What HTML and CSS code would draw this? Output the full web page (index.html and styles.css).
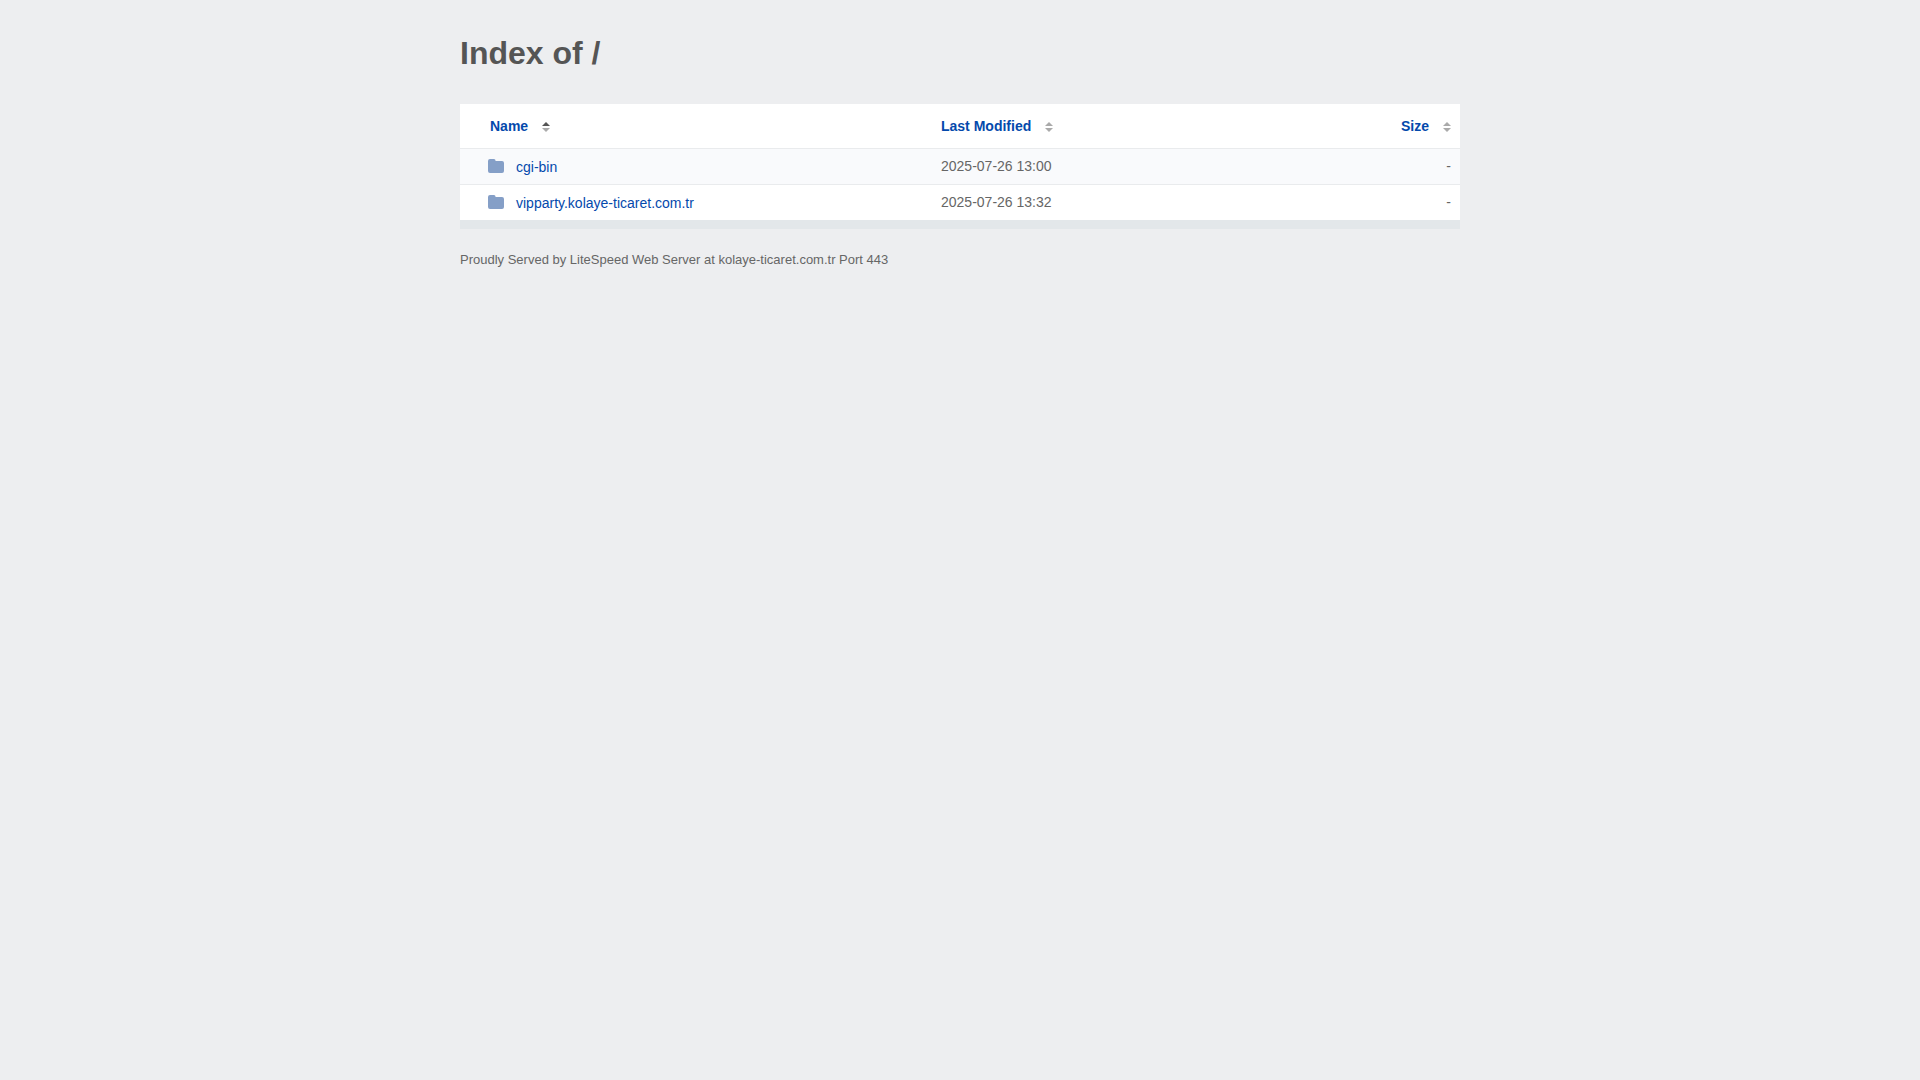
FILE: index.html
```html
<!DOCTYPE html>
<html lang="en">
<head>
    <meta charset="UTF-8">
    <meta name="viewport" content="width=device-width, initial-scale=1.0">
    <title>Index of /</title>
    <link rel="stylesheet" href="styles.css">
</head>
<body>

<!-- Folder icon used by the rows -->
<svg class="sprite" aria-hidden="true">
    <symbol id="folder" viewBox="0 0 16 16">
        <path d="M2 1h4a1.5 1.5 0 0 1 1.5 1.5V3H14a2 2 0 0 1 2 2v8a2 2 0 0 1-2 2H2a2 2 0 0 1-2-2V3a2 2 0 0 1 2-2z"/>
    </symbol>
</svg>

<div class="container">
    <h1>Index of /</h1>

    <table class="listing">
        <thead>
            <tr>
                <th class="name sort-up"><a href="#">Name</a><span class="arrows"></span></th>
                <th class="modified"><a href="#">Last Modified</a><span class="arrows"></span></th>
                <th class="size"><a href="#">Size</a><span class="arrows"></span></th>
            </tr>
        </thead>
        <tbody>
            <tr>
                <td class="name"><a href="#"><svg class="icon"><use href="#folder"/></svg>cgi-bin</a></td>
                <td class="modified">2025-07-26 13:00</td>
                <td class="size">-</td>
            </tr>
            <tr>
                <td class="name"><a href="#"><svg class="icon"><use href="#folder"/></svg>vipparty.kolaye-ticaret.com.tr</a></td>
                <td class="modified">2025-07-26 13:32</td>
                <td class="size">-</td>
            </tr>
        </tbody>
    </table>

    <footer>Proudly Served by LiteSpeed Web Server at kolaye-ticaret.com.tr Port 443</footer>
</div>

</body>
</html>
```
FILE: styles.css
```css
/* General styles */
body {
    font-family: "Liberation Sans", Arial, sans-serif;
    font-size: 14px;
    line-height: 19px;
    color: #666;
    background-color: #edeef0;
    margin: 0;
    padding: 32px 0 20px;
}

.sprite {
    display: none;
}

.container {
    max-width: 1000px;
    margin: 0 auto;
}

h1 {
    font-size: 32px;
    line-height: 42px;
    color: #555;
    margin: 0 0 30px;
}

a {
    color: #0449ac;
    text-decoration: none;
}

a:hover {
    text-decoration: underline;
}

/* File table */
.listing {
    width: 100%;
    table-layout: fixed;
    border-spacing: 0;
    background-color: #fff;
    border-bottom: 9px solid #e3e7ea;
}

.listing th,
.listing td {
    box-sizing: border-box;
    padding: 8px 9px;
    text-align: left;
    vertical-align: middle;
}

.listing th {
    padding: 13px 9px 12px;
}

.listing tbody td {
    border-top: 1px solid #e9ebed;
}

.listing tbody tr:nth-child(odd) {
    background-color: #f9fafc;
}

.listing th.name {
    width: 47%;
    padding-left: 30px;
}

.listing td.name {
    padding: 9px 9px 7px 28px;
}

.listing .modified {
    padding-left: 11px;
}

.listing .size {
    text-align: right;
}

td.name a {
    display: flex;
    align-items: center;
}

.icon {
    width: 16px;
    height: 16px;
    margin: 0 12px 3px 0;
    fill: #859fc7;
}

/* Sort arrows */
.arrows {
    display: inline-block;
    width: 8px;
    margin-left: 14px;
    vertical-align: middle;
}

.arrows::before,
.arrows::after {
    content: "";
    display: block;
    border: 4px solid transparent;
}

.arrows::before {
    border-top: 0;
    border-bottom-color: #aaa;
    margin-bottom: 2px;
}

.arrows::after {
    border-bottom: 0;
    border-top-color: #aaa;
}

.sort-up .arrows::before {
    border-bottom-color: #555;
}

footer {
    font-size: 13px;
    margin-top: 21px;
}
```
